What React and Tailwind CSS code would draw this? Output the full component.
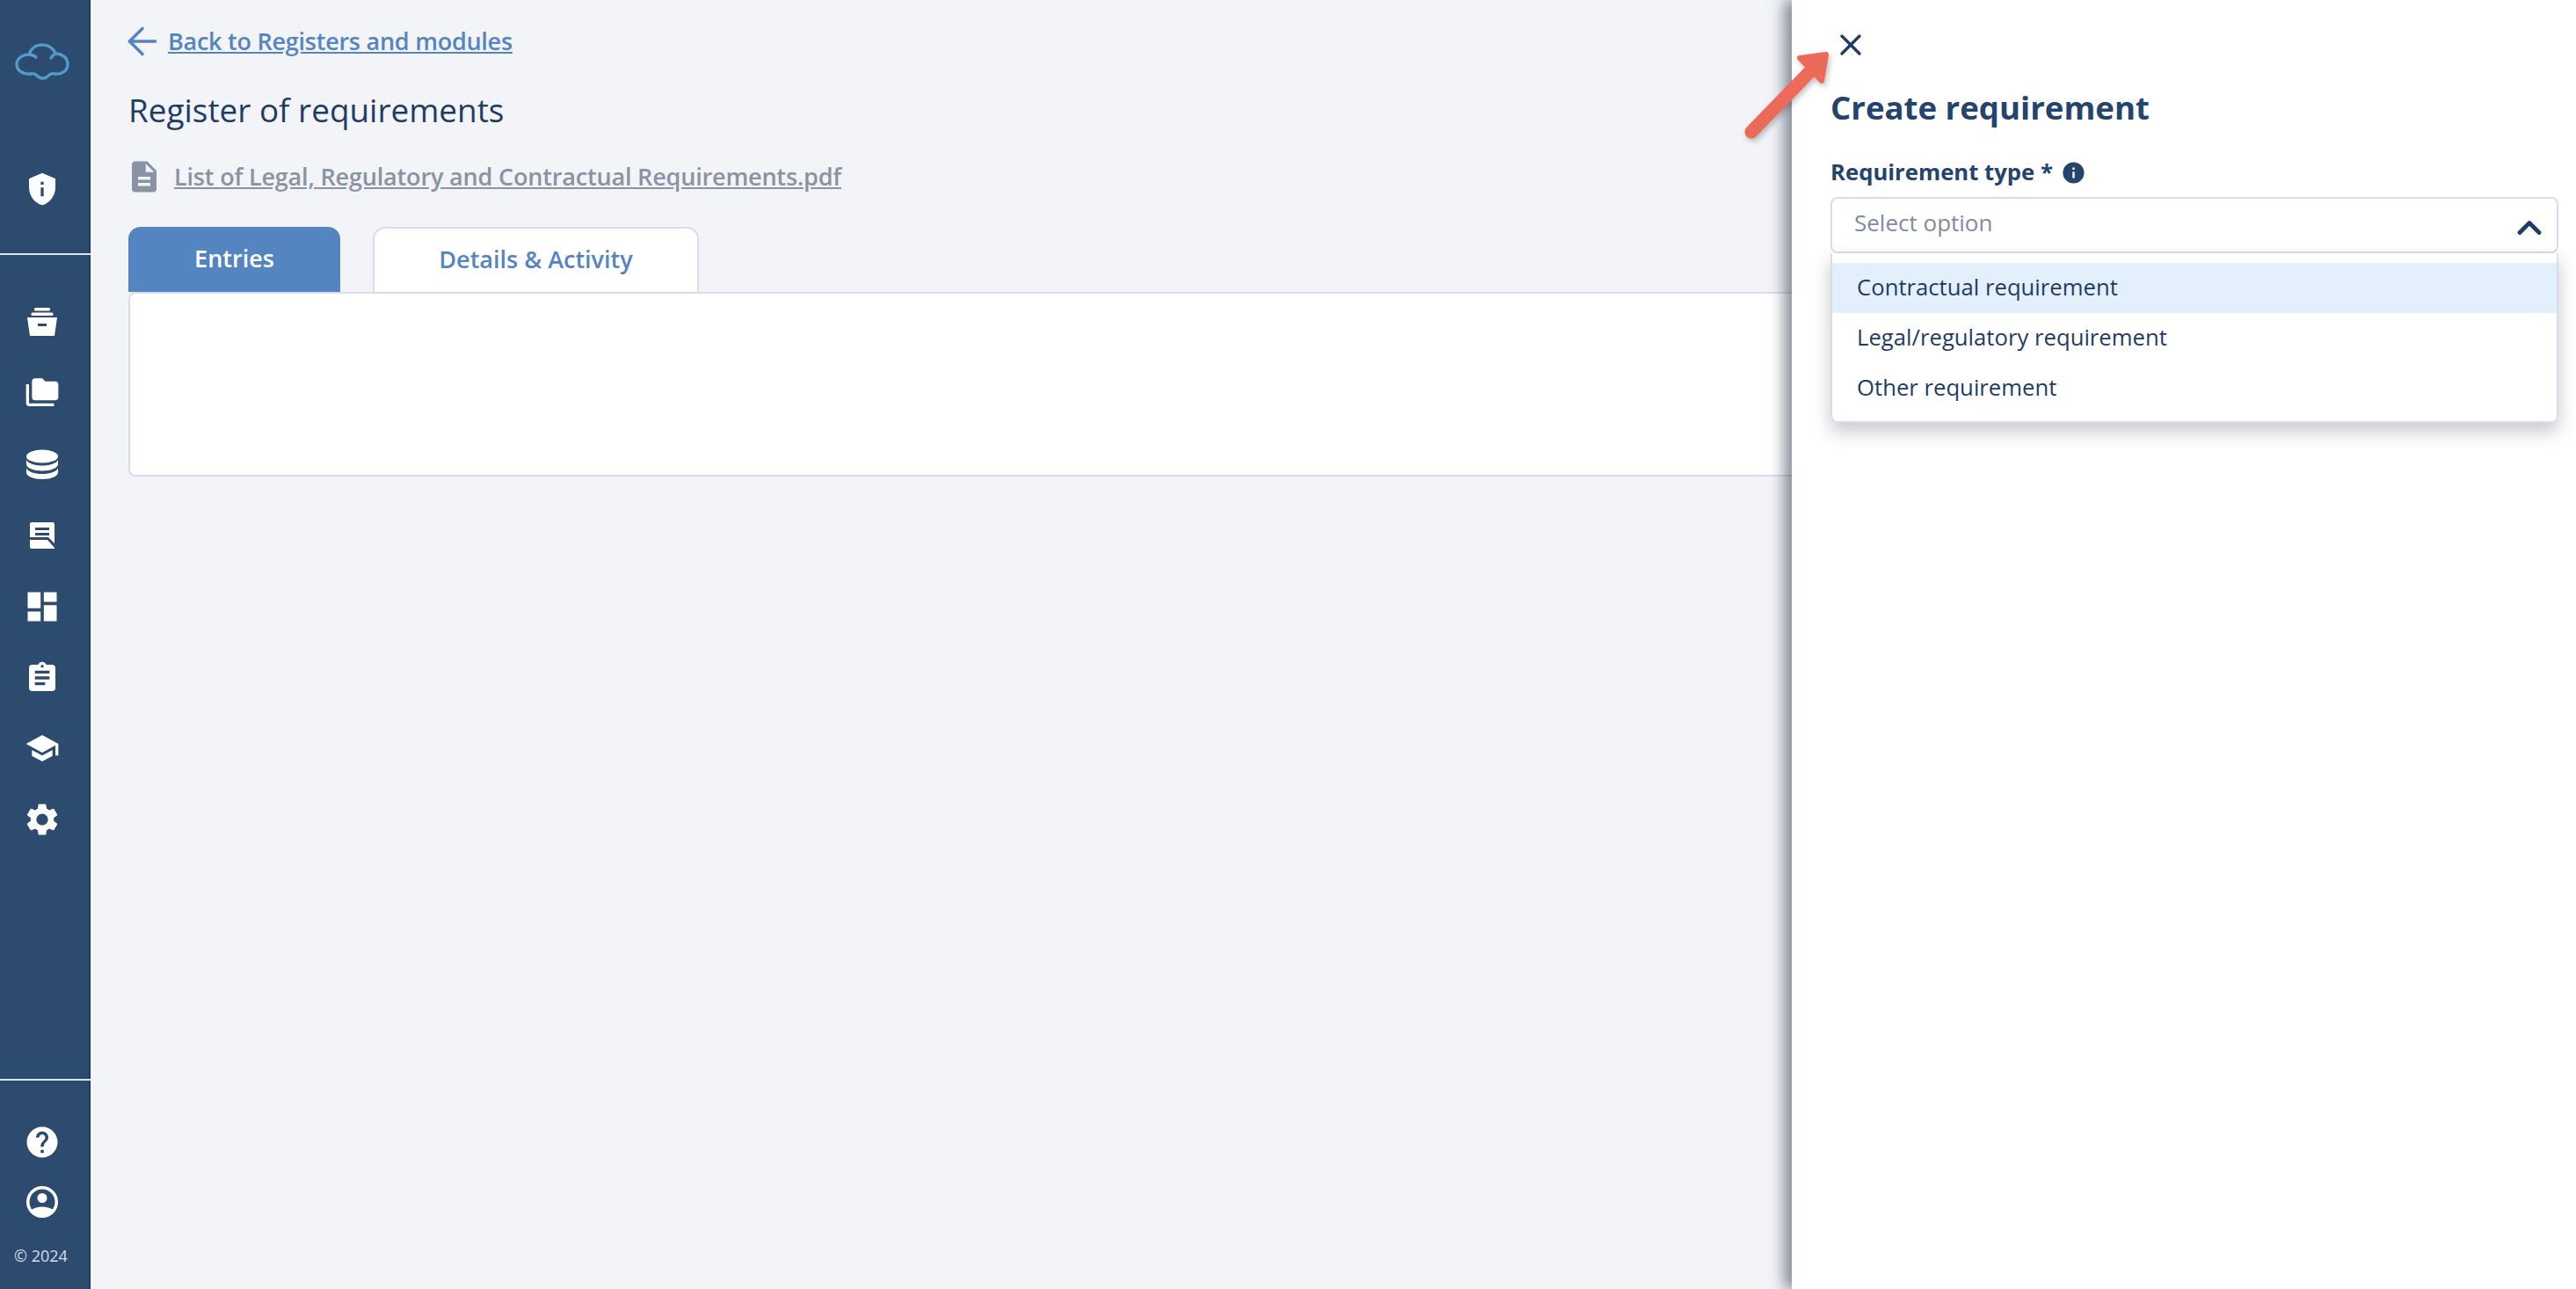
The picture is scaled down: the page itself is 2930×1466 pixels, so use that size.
import React from 'react'
import { ArrowLeft, ChevronUp, X } from 'lucide-react'
import {
  MdPrivacyTip, MdFolderCopy, MdDashboard, MdAssignment, MdSchool, MdSettings,
  MdHelp, MdDescription, MdInfo,
} from 'react-icons/md'

function CloudLogo() {
  return (
    <svg width="62" height="46" viewBox="0 0 62 46" fill="none" stroke="#4f9ccb" strokeWidth="3.4" strokeLinecap="round">
      <path d="M18 36c-9 1-16-4-16-11 0-6 6-11 14-11 2-7 8-11 15-11 7 0 13 4 15 10 8 0 14 5 14 12 0 7-6 12-15 11" />
      <path d="M16 14c3 0 6 1 8 3M46 13c-2 1-4 3-5 5M18 36c3-1 5 0 7 2 4 4 10 4 13 0 2-2 4-3 7-2" />
    </svg>
  )
}

function ArchiveIcon() {
  return (
    <svg width="36" height="36" viewBox="0 0 36 36" fill="#fff">
      <rect x="9" y="2" width="18" height="3.5" rx="1.5" />
      <rect x="5.500" y="7.500" width="25" height="3.500" rx="1.500" />
      <path d="M1 13h34l-3 21H4L1 13zm12 7v3h10v-3H13z" fillRule="evenodd" />
    </svg>
  )
}

function DatabaseIcon() {
  return (
    <svg width="36" height="36" viewBox="0 0 36 36" fill="#fff">
      <ellipse cx="18" cy="9" rx="18" ry="7.5" />
      <path d="M0 13c2 4 9 6.5 18 6.5S34 17 36 13v5c0 4-8 7.5-18 7.5S0 22 0 18v-5z" />
      <path d="M0 22.500c2 4 9 6.500 18 6.500s16-2.500 18-6.500v5c0 4-8 7.500-18 7.500S0 31.500 0 27.500v-5z" />
    </svg>
  )
}

function ReportIcon() {
  return (
    <svg width="30" height="32" viewBox="0 0 30 32" fill="#fff">
      <path d="M3 1h24a2 2 0 0 1 2 2v22l-7-7H1V3a2 2 0 0 1 2-2zM7 7v3h16V7H7zm0 6v3h16v-3H7z" fillRule="evenodd" />
      <path d="M1 21h20l8 9v1H3a2 2 0 0 1-2-2v-8z" />
    </svg>
  )
}

function UserIcon() {
  return (
    <svg width="36" height="36" viewBox="0 0 36 36" fill="#fff">
      <path d="M18 0a18 18 0 1 1 0 36a18 18 0 0 1 0-36zm0 3.500a14.500 14.500 0 0 0-14.500 14.500c0 3.200 1 6.200 2.800 8.600C9.500 24.600 13.500 23.500 18 23.500s8.500 1.100 11.700 3.100A14.500 14.500 0 0 0 32.500 18 14.500 14.500 0 0 0 18 3.500z" fillRule="evenodd" />
      <circle cx="18" cy="13.500" r="5.500" />
    </svg>
  )
}

const navIcons = [
  { key: 'archive', h: 'h-[81px]', icon: <ArchiveIcon /> },
  { key: 'folder', h: 'h-[82px]', icon: <MdFolderCopy size={40} color="#fff" /> },
  { key: 'database', h: 'h-[80px]', icon: <DatabaseIcon /> },
  { key: 'report', h: 'h-[81px]', icon: <ReportIcon /> },
  { key: 'dashboard', h: 'h-[81px]', icon: <MdDashboard size={44} color="#fff" /> },
  { key: 'assignment', h: 'h-[81px]', icon: <MdAssignment size={40} color="#fff" /> },
  { key: 'school', h: 'h-[80px]', icon: <MdSchool size={40} color="#fff" /> },
  { key: 'settings', h: 'h-[81px]', icon: <MdSettings size={44} color="#fff" /> },
]

function Sidebar() {
  return (
    <aside className="w-[103px] h-full shrink-0 flex flex-col bg-[#2d4b6f] border-r-2 border-[#1b3a63]">
      <div className="h-[288px] flex flex-col items-center pr-[6px]">
        <div className="mt-[48px]"><CloudLogo /></div>
        <div className="mt-[101px]"><MdPrivacyTip size={40} color="#fff" /></div>
      </div>
      <div className="h-[2px] bg-[#dbe6f2] w-[103px] shrink-0" />
      <nav className="flex-1 flex flex-col items-center pt-[35px] pr-[6px]">
        {navIcons.map(n => (
          <div key={n.key} className={`${n.h} w-full flex items-center justify-center`}>{n.icon}</div>
        ))}
      </nav>
      <div className="h-[2px] bg-[#dbe6f2] w-[103px] shrink-0" />
      <div className="h-[237px] flex flex-col items-center pt-[49px] pr-[6px]">
        <MdHelp size={42} color="#fff" />
        <div className="mt-[29px]"><UserIcon /></div>
        <div className="mt-[31px] -ml-[2px] text-[18px] leading-6 text-[#d5dde8] whitespace-nowrap">© 2024</div>
      </div>
    </aside>
  )
}

function Main() {
  return (
    <main className="flex-1 pl-[43px] pt-[30px] min-w-0">
      <div className="flex items-center h-[34px] text-[#5585c1]">
        <ArrowLeft size={50} strokeWidth={1.7} className="shrink-0 -ml-[9px]" />
        <a className="ml-[4px] text-[27px] leading-[34px] font-semibold underline tracking-[-0.25px]">Back to Registers and modules</a>
      </div>
      <h1 className="mt-[35px] text-[36.9px] leading-[52px] text-[#1f3c66]">Register of requirements</h1>
      <div className="mt-[31px] flex items-center h-[38px] text-[#8a93a4]">
        <MdDescription size={42} className="-ml-[3px] shrink-0" />
        <a className="ml-[13px] text-[27px] leading-[34px] font-semibold underline tracking-[-0.17px]">List of Legal, Regulatory and Contractual Requirements.pdf</a>
      </div>
      <div className="mt-[38px] flex gap-[37px] h-[74px] items-end">
        <div className="w-[241px] h-[74px] pb-[2px] rounded-t-[14px] bg-[#5585c1] flex items-center justify-center text-[27px] font-semibold text-white">Entries</div>
        <div className="w-[371px] h-[74px] pb-[2px] rounded-t-[14px] bg-white border-2 border-b-0 border-[#d5deea] flex items-center justify-center text-[27px] font-semibold text-[#5585c1]">Details &amp; Activity</div>
      </div>
      <div className="h-[210px] bg-white border-2 border-[#d5deea] rounded-[8px]" />
    </main>
  )
}

const options = ['Contractual requirement', 'Legal/regulatory requirement', 'Other requirement']

function Panel() {
  return (
    <section className="absolute top-0 right-0 bottom-0 w-[892px] bg-white shadow-[-8px_0_16px_rgba(30,40,60,0.55)] pl-[44px] pr-[20px]">
      <div className="pt-[31px] pl-[3px] h-[76px]">
        <X size={40} strokeWidth={2} color="#1f3c66" />
      </div>
      <h2 className="mt-[15px] text-[36.6px] leading-[62px] font-bold text-[#24436d]">Create requirement</h2>
      <div className="mt-[25px] flex items-center h-[36px]">
        <span className="text-[25.7px] leading-[36px] font-bold text-[#24436d]">Requirement type *</span>
        <MdInfo size={29} color="#24436d" className="ml-[9px]" />
      </div>
      <div className="mt-[10px] h-[64px] border-2 border-[#d5deea] rounded-[8px] flex items-center justify-between pl-[25px] pr-[9px]">
        <span className="text-[26px] text-[#7f8b9e] -mt-[5px]">Select option</span>
        <ChevronUp size={44} strokeWidth={2.6} color="#1f3c66" className="mt-[6px]" />
      </div>
      <div className="h-[193px] border-2 border-t-0 border-[#d5deea] rounded-b-[8px] shadow-[0_10px_20px_rgba(30,40,60,0.25)] pt-[11px] text-[25.7px] text-[#1f3c66]">
        {options.map((o, i) => (
          <div key={o} className={`h-[57px] flex items-center pl-[28px] ${i === 0 ? 'bg-[#e3f0fc]' : ''}`}>{o}</div>
        ))}
      </div>
    </section>
  )
}

export default function App() {
  return (
    <div className="relative h-screen w-full overflow-hidden flex bg-[#f2f4f8] font-['Open_Sans',sans-serif]">
      <Sidebar />
      <Main />
      <Panel />
      {/* annotation arrow */}
      <svg className="absolute left-[1980px] top-[50px] drop-shadow-[2px_3px_3px_rgba(0,0,0,0.25)]" width="110" height="115" viewBox="1980 50 110 115" fill="#ee6a58">
        <path d="M1992 150L2062 78" stroke="#ee6a58" strokeWidth="15" strokeLinecap="round" />
        <path d="M2047 66L2077 62L2072 92Z" stroke="#ee6a58" strokeWidth="6" strokeLinejoin="round" />
      </svg>
    </div>
  )
}
